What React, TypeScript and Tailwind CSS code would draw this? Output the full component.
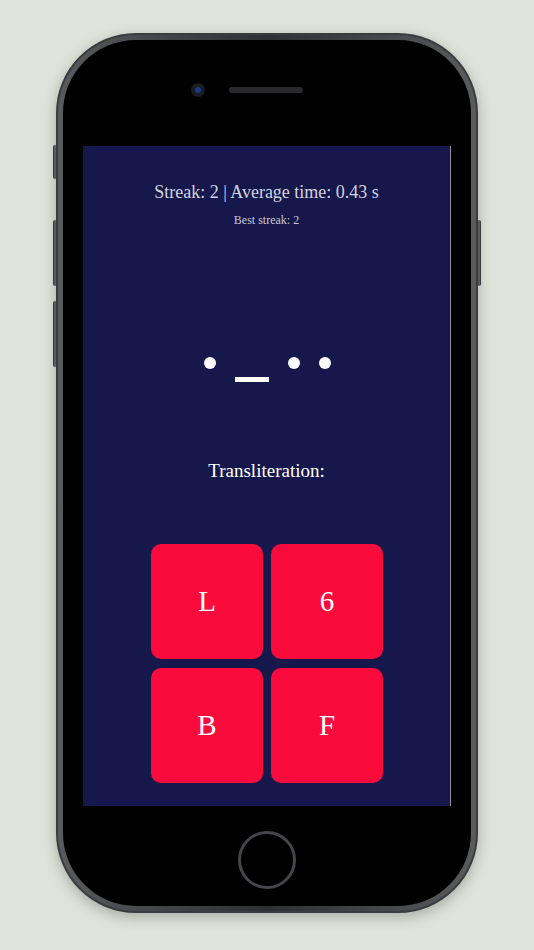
import React from 'react';

const serif = { fontFamily: '"Liberation Serif", "DejaVu Serif", serif' };

const Dot = () => <span className="block w-[12px] h-[12px] rounded-full bg-white" />;
const Dash = () => <span className="block w-[34px] h-[5px] bg-white mt-[20px]" />;

const answers = ['L', '6', 'B', 'F'];

const SideButton: React.FC<{ className: string }> = ({ className }) => (
  <div className={`absolute w-[4px] rounded-[2px] bg-gradient-to-r from-[#2b2c30] via-[#6b6c70] to-[#2b2c30] ${className}`} />
);

export default function App() {
  return (
    <div className="w-[534px] h-[950px] bg-[#e0e3da] flex justify-center pt-[33px]" style={serif}>
      <div className="relative w-[422px] h-[880px]">
        <SideButton className="left-[-3px] top-[112px] h-[34px]" />
        <SideButton className="left-[-3px] top-[187px] h-[66px]" />
        <SideButton className="left-[-3px] top-[268px] h-[66px]" />
        <SideButton className="right-[-3px] top-[187px] h-[66px]" />

        <div className="w-full h-full rounded-[80px] bg-[#3a3b3f] p-[2px] shadow-[0_4px_14px_rgba(0,0,0,0.25)]">
          <div className="w-full h-full rounded-[78px] bg-gradient-to-r from-[#5a5b5f] via-[#2f3034] to-[#5a5b5f] p-[5px]">
            <div className="w-full h-full rounded-[73px] bg-black flex flex-col items-center">
              <div className="h-[106px] w-full flex items-start justify-center pt-[43px] gap-[24px]">
                <div className="w-[14px] h-[14px] rounded-full bg-[#1c1c20] flex items-center justify-center -ml-[40px]">
                  <div className="w-[6px] h-[6px] rounded-full bg-[#1d3a8a]" />
                </div>
                <div className="w-[74px] h-[6px] mt-[4px] rounded-full bg-[#2a2a2d]" />
              </div>

              <div className="w-[368px] h-[660px] bg-[#16174a] border-r border-[#8a8aa0] flex flex-col items-center">
                <p className="mt-[34px] text-[18px] leading-[24px] text-[#d3d3e0]">
                  Streak: 2 | Average time: 0.43 s
                </p>
                <p className="mt-[9px] text-[12px] leading-[14px] text-[#c8c8d8]">Best streak: 2</p>

                <div className="mt-[130px] h-[40px] flex items-start gap-[19px] ml-[1px]">
                  <Dot />
                  <Dash />
                  <Dot />
                  <Dot />
                </div>

                <p className="mt-[62px] text-[19px] leading-[24px] text-white">Transliteration:</p>

                <div className="mt-[61px] grid grid-cols-[112px_112px] gap-x-[8px] gap-y-[9px] ml-[1px]">
                  {answers.map((a) => (
                    <button
                      key={a}
                      className="h-[115px] rounded-[10px] bg-[#fb0b3c] text-white text-[29px] flex items-center justify-center"
                      style={serif}
                    >
                      {a}
                    </button>
                  ))}
                </div>
              </div>

              <div className="flex-1 w-full flex items-center justify-center">
                <div className="w-[58px] h-[58px] rounded-full border-[3px] border-[#45464a] mt-[8px]" />
              </div>
            </div>
          </div>
        </div>
      </div>
    </div>
  );
}
